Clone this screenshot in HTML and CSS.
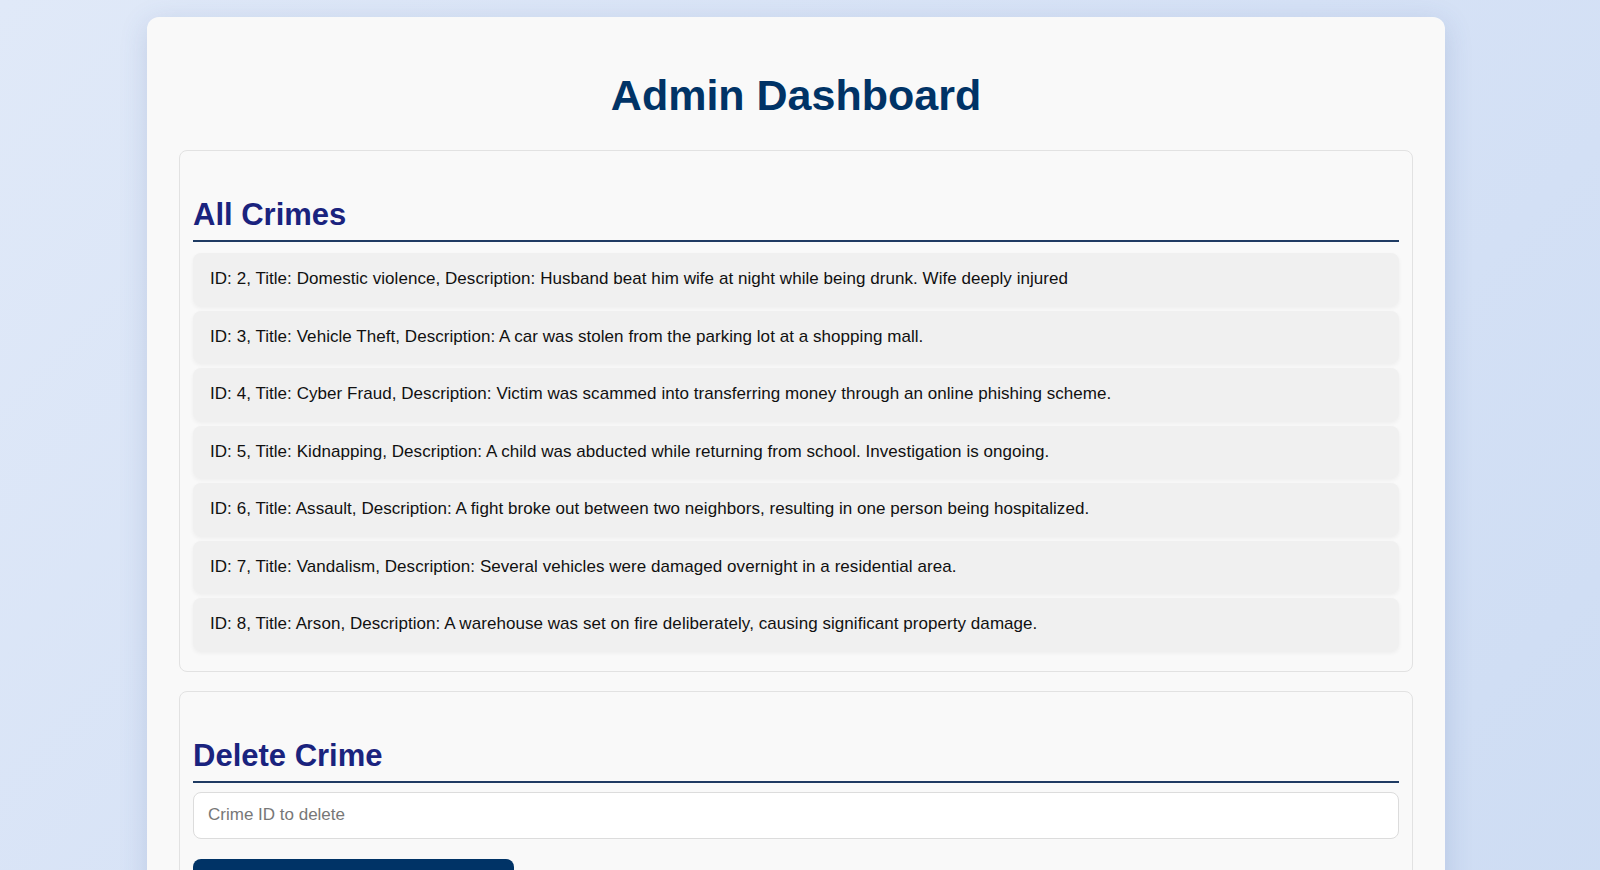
FILE: index.html
```html
<!DOCTYPE html>
<html lang="en">
<head>
<meta charset="utf-8">
<title>Admin Dashboard</title>
<link rel="stylesheet" href="styles.css">
</head>
<body>
<div class="page">
  <main class="container">
    <h1 class="title">Admin Dashboard</h1>

    <section class="card">
      <h2 class="card-title">All Crimes</h2>
      <ul class="crime-list">
        <li class="crime-item">ID: 2, Title: Domestic violence, Description: Husband beat him wife at night while being drunk. Wife deeply injured</li>
        <li class="crime-item">ID: 3, Title: Vehicle Theft, Description: A car was stolen from the parking lot at a shopping mall.</li>
        <li class="crime-item">ID: 4, Title: Cyber Fraud, Description: Victim was scammed into transferring money through an online phishing scheme.</li>
        <li class="crime-item">ID: 5, Title: Kidnapping, Description: A child was abducted while returning from school. Investigation is ongoing.</li>
        <li class="crime-item">ID: 6, Title: Assault, Description: A fight broke out between two neighbors, resulting in one person being hospitalized.</li>
        <li class="crime-item">ID: 7, Title: Vandalism, Description: Several vehicles were damaged overnight in a residential area.</li>
        <li class="crime-item">ID: 8, Title: Arson, Description: A warehouse was set on fire deliberately, causing significant property damage.</li>
      </ul>
    </section>

    <section class="card">
      <h2 class="card-title">Delete Crime</h2>
      <form class="delete-form">
        <input class="text-input" type="text" placeholder="Crime ID to delete">
        <button class="btn" type="button">Delete Crime</button>
      </form>
    </section>
  </main>
</div>
</body>
</html>
```

FILE: styles.css
```css
* { box-sizing: border-box; }

html, body {
  margin: 0;
  padding: 0;
}

body {
  font-family: "Liberation Sans", Arial, Helvetica, sans-serif;
  background: linear-gradient(135deg, #e0e9f8 0%, #d6e2f6 50%, #cddcf3 100%);
  min-height: 100vh;
  color: #111;
}

.page {
  display: flex;
  justify-content: center;
  padding: 17px 8px 40px 0;
}

.container {
  width: 1298px;
  background: #f9f9f9;
  border-radius: 12px;
  box-shadow: 0 6px 28px rgba(60, 90, 150, 0.18);
  padding: 0 32px 32px;
}

.title {
  margin: 0;
  padding: 54px 0 31px;
  text-align: center;
  font-size: 43px;
  line-height: 48px;
  font-weight: 700;
  color: #003366;
}

.card {
  background: #f9f9f9;
  border: 1px solid #e2e2e2;
  border-radius: 8px;
  padding: 0 13px 15px;
  margin-bottom: 19px;
}

.card-title {
  margin: 47px 0 8px;
  padding-bottom: 8px;
  font-size: 31px;
  line-height: 34px;
  font-weight: 700;
  color: #1a237e;
  border-bottom: 2px solid #1f3b63;
}

.crime-list {
  list-style: none;
  margin: 0;
  padding: 3px 0 0;
}

.crime-item {
  background: #f0f0f0;
  border-radius: 8px;
  padding: 16px 16px 16px 17px;
  margin-bottom: 5px;
  font-size: 17px;
  letter-spacing: 0.05px;
  line-height: 20.5px;
  color: #111;
  box-shadow: 0 2px 4px rgba(0, 0, 0, 0.05);
}

.delete-form {
  display: flex;
  flex-direction: column;
  align-items: flex-start;
  gap: 20px;
  padding-top: 1px;
}

.text-input {
  width: 100%;
  height: 47px;
  padding: 0 14px;
  font-family: inherit;
  font-size: 17px;
  color: #222;
  background: #fff;
  border: 1px solid #dcdcdc;
  border-radius: 8px;
  outline: none;
}

.text-input::placeholder {
  color: #777;
}

.btn {
  width: 321px;
  height: 46px;
  background: #003366;
  color: #fff;
  border: none;
  border-radius: 8px;
  font-family: inherit;
  font-size: 17px;
  font-weight: 700;
}
```
